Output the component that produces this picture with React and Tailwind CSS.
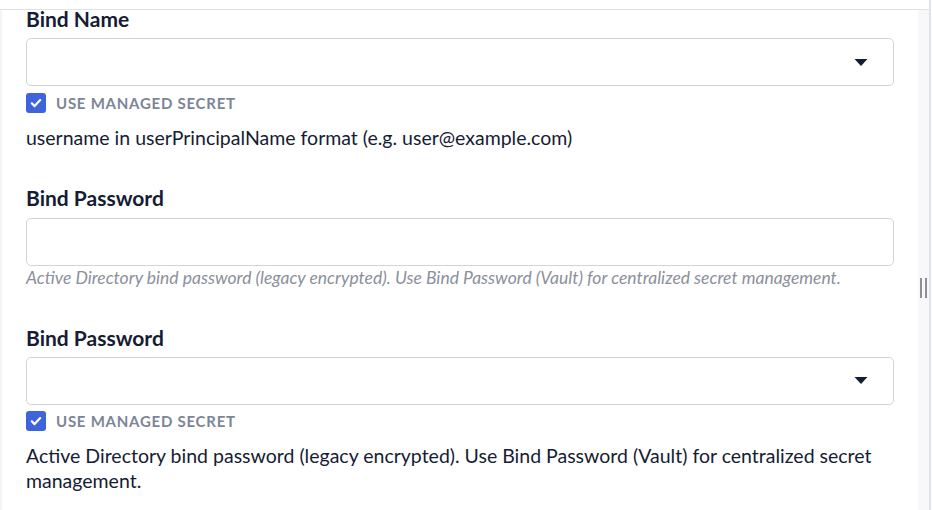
import React from "react";

function Check() {
  return (
    <span className="flex h-5 w-5 items-center justify-center rounded-[3px] bg-[#3e63dd]">
      <svg width="14" height="14" viewBox="0 0 14 14" fill="none">
        <path d="M2.8 7.3l2.8 2.8 5.6-6" stroke="white" strokeWidth="2.2" strokeLinecap="round" strokeLinejoin="round" />
      </svg>
    </span>
  );
}

function Select() {
  return (
    <div className="flex h-[48px] items-center justify-end rounded-[5px] border border-[#d3d3d6] bg-white pr-[25px]">
      <svg width="14" height="9" viewBox="0 0 14 9">
        <path d="M0.5 1h13L7 8z" fill="#151c33" />
      </svg>
    </div>
  );
}

function Managed({ className }) {
  return (
    <div className={"flex items-center gap-[10px] " + className}>
      <Check />
      <span className="text-[15px] font-bold uppercase tracking-[0.05em] text-[#7c8597]">Use managed secret</span>
    </div>
  );
}

export default function App() {
  return (
    <div
      className="flex h-[510px] w-[932px] overflow-hidden bg-white"
      style={{ fontFamily: "Lato, 'Noto Sans', sans-serif" }}
    >
      <div className="flex min-w-0 flex-1 flex-col">
        <div className="h-[10px] shrink-0 border-b border-[#dfe2ea]" />
        <div className="flex flex-1 border-l-2 border-[#f3f4f7]">
          <div className="flex-1 pl-[24px] pr-[24px] text-[#151c33]">
            <div className="text-[21px] font-bold leading-[18px]">Bind Name</div>
            <div className="mt-[10px]">
              <Select />
            </div>
            <Managed className="mt-[6px]" />
            <div className="mt-[11px] text-[19.5px] leading-[24px]">
              username in userPrincipalName format (e.g. user@example.com)
            </div>

            <div className="mt-[36px] text-[21px] font-bold leading-[24px]">Bind Password</div>
            <div className="mt-[8px] h-[48px] rounded-[5px] border border-[#d3d3d6] bg-white" />
            <div className="mt-[1px] text-[17.5px] italic leading-[22px] text-[#8b909b]">
              Active Directory bind password (legacy encrypted). Use Bind Password (Vault) for centralized secret management.
            </div>

            <div className="mt-[37px] text-[21px] font-bold leading-[24px]">Bind Password</div>
            <div className="mt-[7px]">
              <Select />
            </div>
            <Managed className="mt-[5px]" />
            <div className="mt-[11px] text-[19.5px] leading-[25px]">
              Active Directory bind password (legacy encrypted). Use Bind Password (Vault) for centralized secret management.
            </div>
          </div>
          <div className="relative w-[11px] shrink-0 bg-[#f8f8fa]">
            <div className="absolute left-[2px] top-[268px] flex gap-[3px]">
              <div className="h-[20px] w-[2px] bg-[#8f8f93]" />
              <div className="h-[20px] w-[2px] bg-[#8f8f93]" />
            </div>
            <div className="absolute left-0 top-[500px] h-[30px] w-[11px] rounded-full bg-[#c4c4c6]" />
          </div>
        </div>
      </div>
      <div className="w-[3px] shrink-0 border-l-2 border-[#dfe2ea] bg-white" />
    </div>
  );
}
